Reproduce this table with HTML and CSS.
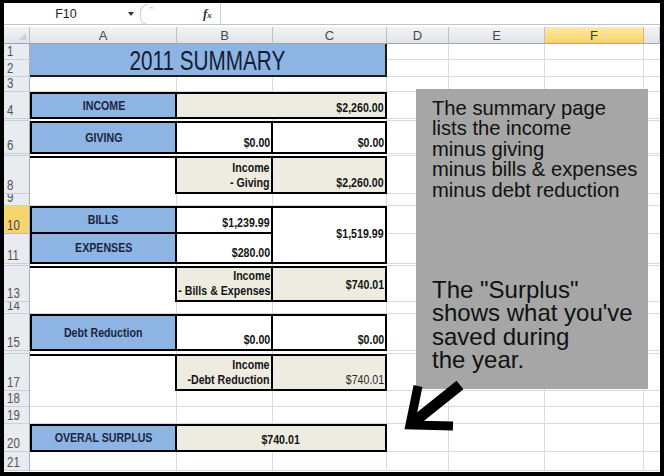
FILE: index.html
```html
<!DOCTYPE html>
<html>
<head>
<meta charset="utf-8">
<title>2011 Summary</title>
<link rel="stylesheet" href="styles.css">
</head>
<body>
<div class="frame">
  <div class="fbar">
    <div class="namebox">F10</div>
    <div class="dd"><span class="tri"></span></div>
    <div class="fbtn"><span class="arc"></span><span class="dot"></span></div>
    <div class="fx"><i>f</i><span class="x">x</span></div>
    <div class="finput"></div>
  </div>

  <div class="sheet">
    <div class="corner"><span class="ctri"></span></div>
    <div class="ch">A</div>
    <div class="ch">B</div>
    <div class="ch">C</div>
    <div class="ch">D</div>
    <div class="ch">E</div>
    <div class="ch sel">F</div>
    <div class="ch"></div>

    <div class="gl r1"></div>
    <div class="gl r2"></div>
    <div class="gl r3"></div>
    <div class="gl r4"></div>
    <div class="gl glh r5"></div>
    <div class="gl r6"></div>
    <div class="gl glh r7"></div>
    <div class="gl r8"></div>
    <div class="gl r9"></div>
    <div class="gl r10"></div>
    <div class="gl r11"></div>
    <div class="gl glh r12"></div>
    <div class="gl r13"></div>
    <div class="gl r14"></div>
    <div class="gl r15"></div>
    <div class="gl glh r16"></div>
    <div class="gl r17"></div>
    <div class="gl r18"></div>
    <div class="gl r19"></div>
    <div class="gl r20"></div>
    <div class="gl r21"></div>

    <div class="rh r1"><span>1</span></div>
    <div class="rh r2"><span>2</span></div>
    <div class="rh r3"><span>3</span></div>
    <div class="rh r4"><span>4</span></div>
    <div class="rh r5"></div>
    <div class="rh r6"><span>6</span></div>
    <div class="rh r7"></div>
    <div class="rh r8"><span>8</span></div>
    <div class="rh r9"><span>9</span></div>
    <div class="rh sel r10"><span>10</span></div>
    <div class="rh r11"><span>11</span></div>
    <div class="rh r12"></div>
    <div class="rh r13"><span>13</span></div>
    <div class="rh r14"><span>14</span></div>
    <div class="rh r15"><span>15</span></div>
    <div class="rh r16"></div>
    <div class="rh r17"><span>17</span></div>
    <div class="rh r18"><span>18</span></div>
    <div class="rh r19"><span>19</span></div>
    <div class="rh r20"><span>20</span></div>
    <div class="rh r21"><span>21</span></div>

    <div class="cell title"><span class="t tt">2011 SUMMARY</span></div>

    <div class="cell bx blue lbl ca r4"><span class="t">INCOME</span></div>
    <div class="cell bx tan val cbc r4 ml"><span class="t">$2,260.00</span></div>

    <div class="cell bx blue lbl ca r6"><span class="t">GIVING</span></div>
    <div class="cell bx val cb r6 ml"><span class="t">$0.00</span></div>
    <div class="cell bx val cc r6 ml"><span class="t">$0.00</span></div>

    <div class="cell topb ca r8"></div>
    <div class="cell bx tan val cb r8 ml"><span class="t">Income<br>- Giving</span></div>
    <div class="cell bx tan val cc r8 ml"><span class="t">$2,260.00</span></div>

    <div class="cell bx blue lbl ca r10"><span class="t">BILLS</span></div>
    <div class="cell bx blue lbl ca r11 mt"><span class="t">EXPENSES</span></div>
    <div class="cell bx val cb r10 ml"><span class="t">$1,239.99</span></div>
    <div class="cell bx val cb r11 ml mt"><span class="t">$280.00</span></div>
    <div class="cell bx val vmid cc r1011 ml"><span class="t">$1,519.99</span></div>

    <div class="cell topb ca r13"></div>
    <div class="cell bx tan val cb r13 ml"><span class="t">Income<br>- Bills &amp; Expenses</span></div>
    <div class="cell bx tan val vmid low cc r13 ml"><span class="t">$740.01</span></div>

    <div class="cell bx blue lbl ca r15"><span class="t">Debt Reduction</span></div>
    <div class="cell bx val cb r15 ml"><span class="t">$0.00</span></div>
    <div class="cell bx val cc r15 ml"><span class="t">$0.00</span></div>

    <div class="cell topb ca r17"></div>
    <div class="cell bx tan val cb r17 ml"><span class="t">Income<br>-Debt Reduction</span></div>
    <div class="cell bx tan val reg cc r17 ml"><span class="t">$740.01</span></div>

    <div class="cell bx blue lbl ca r20"><span class="t">OVERAL SURPLUS</span></div>
    <div class="cell bx tan val hc cbc r20 ml"><span class="t">$740.01</span></div>
  </div>

  <div class="note">
    <p class="n1">The summary page<br>lists the income<br>minus giving<br>minus bills &amp; expenses<br>minus debt reduction</p>
    <p class="n2">The "Surplus"<br>shows what you've<br>saved during<br>the year.</p>
  </div>

  <svg class="arrow" width="70" height="62" viewBox="0 0 70 62">
    <line x1="60" y1="7" x2="15" y2="43" stroke="#000" stroke-width="11"/>
    <polyline points="18,8 10,47 53,48" fill="none" stroke="#000" stroke-width="9" stroke-linejoin="miter"/>
  </svg>
</div>
</body>
</html>
```

FILE: styles.css
```css
* { box-sizing: border-box; }
html, body { margin: 0; padding: 0; }
body {
  background: #000;
  width: 664px;
  height: 476px;
  overflow: hidden;
  font-family: "Liberation Sans", Arial, sans-serif;
}
.frame {
  position: relative;
  margin: 3px 0 0 4px;
  width: 656px;
  height: 469px;
  background: #fff;
  overflow: hidden;
}

/* formula bar */
.fbar {
  display: flex;
  align-items: center;
  height: 22px;
  border-bottom: 1px solid #c0c5cc;
  margin-bottom: 2px;
  background: #fff;
}
.namebox {
  width: 120px;
  padding-left: 4px;
  text-align: center;
  font-size: 12.5px;
  color: #222;
}
.dd { width: 14px; display: flex; justify-content: center; }
.tri {
  width: 0; height: 0;
  border-left: 3.5px solid transparent;
  border-right: 3.5px solid transparent;
  border-top: 4px solid #333;
}
.fbtn {
  margin-left: 2px;
  width: 18px;
  height: 22px;
  display: flex;
  align-items: flex-start;
  padding-top: 1px;
}
.arc {
  width: 8px;
  height: 21px;
  border: 1px solid #c9ced5;
  border-right: none;
  border-radius: 10px 0 0 10px;
}
.dot {
  width: 5px;
  height: 3px;
  margin-top: 3px;
  margin-left: 1px;
  border-top: 1px solid #c3c8cf;
  border-radius: 3px 3px 0 0;
}
.fx {
  margin-left: 45px;
  width: 17px;
  font-family: "Liberation Serif", serif;
  font-weight: bold;
  font-size: 13px;
  color: #333;
}
.fx .x { font-size: 9px; font-style: italic; }
.finput {
  flex: 1;
  height: 22px;
  border-left: 1px solid #c9ced5;
}

/* sheet grid */
.sheet {
  display: grid;
  grid-template-columns: 26px 147px 96px 114px 62px 96px 99px 16px;
  grid-template-rows: 17px 16px 17px 15px 27px 2px 33px 2px 38px 12px 28px 30px 2px 36px 12px 37px 3px 37px 16px 17px 28px 19px;
  background: linear-gradient(90deg,
    transparent 172px, #d9dbde 172px 173px,
    transparent 173px 268px, #d9dbde 268px 269px,
    transparent 269px 382px, #d9dbde 382px 383px,
    transparent 383px 444px, #d9dbde 444px 445px,
    transparent 445px 540px, #d9dbde 540px 541px,
    transparent 541px 639px, #d9dbde 639px 640px,
    transparent 640px);
}
.corner, .ch {
  background: linear-gradient(#f2f3f5, #e1e4e8);
  border-right: 1px solid #bcc1c8;
  border-bottom: 1px solid #9ea5ae;
}
.corner {
  display: flex;
  justify-content: flex-end;
  align-items: flex-end;
  padding: 0 3px 3px 0;
}
.ctri {
  width: 0; height: 0;
  border-left: 7px solid transparent;
  border-bottom: 7px solid #cdd1d7;
}
.ch {
  display: flex;
  justify-content: center;
  align-items: center;
  font-size: 13px;
  color: #4a4a4a;
}
.ch.sel {
  background: linear-gradient(#fce9a8, #f7d266);
  border-right-color: #e0b550;
  color: #3a3a3a;
}

.rh {
  grid-column: 1;
  display: flex;
  align-items: flex-end;
  padding: 0 0 1px 3px;
  background: #e8ebef;
  border-right: 1px solid #a9b0b9;
  border-bottom: 1px solid #ccd0d6;
  font-size: 14px;
  line-height: 14px;
  color: #555;
  overflow: hidden;
}
.rh span { display: inline-block; transform: scaleX(.82); transform-origin: left bottom; }
.rh.sel { background: #f6d46e; border-bottom-color: #e2b85a; color: #444; }

.gl { grid-column: 2 / -1; border-bottom: 1px solid #d9dbde; }
.gl.glh { grid-column: 5 / -1; }

/* row placement */
.r1 { grid-row: 2; }
.r2 { grid-row: 3; }
.r3 { grid-row: 4; }
.r4 { grid-row: 5; }
.r5 { grid-row: 6; }
.r6 { grid-row: 7; }
.r7 { grid-row: 8; }
.r8 { grid-row: 9; }
.r9 { grid-row: 10; }
.r10 { grid-row: 11; }
.r11 { grid-row: 12; }
.r12 { grid-row: 13; }
.r13 { grid-row: 14; }
.r14 { grid-row: 15; }
.r15 { grid-row: 16; }
.r16 { grid-row: 17; }
.r17 { grid-row: 18; }
.r18 { grid-row: 19; }
.r19 { grid-row: 20; }
.r20 { grid-row: 21; }
.r21 { grid-row: 22; }
.r1011 { grid-row: 11 / 13; }

/* column placement */
.ca { grid-column: 2; }
.cb { grid-column: 3; }
.cc { grid-column: 4; }
.cbc { grid-column: 3 / 5; }

/* cells */
.cell {
  display: flex;
  background: #fff;
  font-size: 12.5px;
  line-height: 15px;
  font-weight: bold;
  color: #141414;
}
.bx { border: 2px solid #000; }
.ml { margin-left: -2px; }
.mt { margin-top: -2px; }
.topb { border-top: 2px solid #000; }
.blue { background: #8db4e2; }
.tan { background: #eeece1; }

.t {
  display: inline-block;
  white-space: nowrap;
  transform: scaleX(.85);
}
.lbl {
  justify-content: center;
  align-items: center;
  padding-top: 1px;
  color: #1b2540;
}
.lbl .t { transform-origin: center; }
.val {
  justify-content: flex-end;
  align-items: flex-end;
  padding: 0 1px 1px 0;
  text-align: right;
}
.val .t { transform-origin: right bottom; }
.vmid { align-items: center; }
.low { padding-top: 3px; }
.hc { justify-content: center; padding-bottom: 2px; }
.hc .t { transform-origin: center bottom; }
.reg { font-weight: normal; color: #2a2a2a; }

.title {
  grid-column: 2 / 5;
  grid-row: 2 / 4;
  background: #8db4e2;
  border-right: 2px solid #1c1c1c;
  border-bottom: 2px solid #1c1c1c;
  justify-content: center;
  align-items: center;
  padding-top: 2px;
  font-weight: normal;
}
.tt {
  font-size: 28px;
  line-height: 28px;
  color: #141c33;
  transform: scaleX(.74);
  transform-origin: center;
}

/* overlay note */
.note {
  position: absolute;
  left: 412px;
  top: 86px;
  width: 232px;
  height: 300px;
  background: #a6a6a6;
  padding: 9px 0 0 16px;
  color: #111;
}
.n1 { margin: 0; font-size: 20.2px; line-height: 20.4px; }
.n2 { margin: 78px 0 0; font-size: 24px; line-height: 23.4px; }

.arrow {
  position: absolute;
  left: 396px;
  top: 375px;
}
```
